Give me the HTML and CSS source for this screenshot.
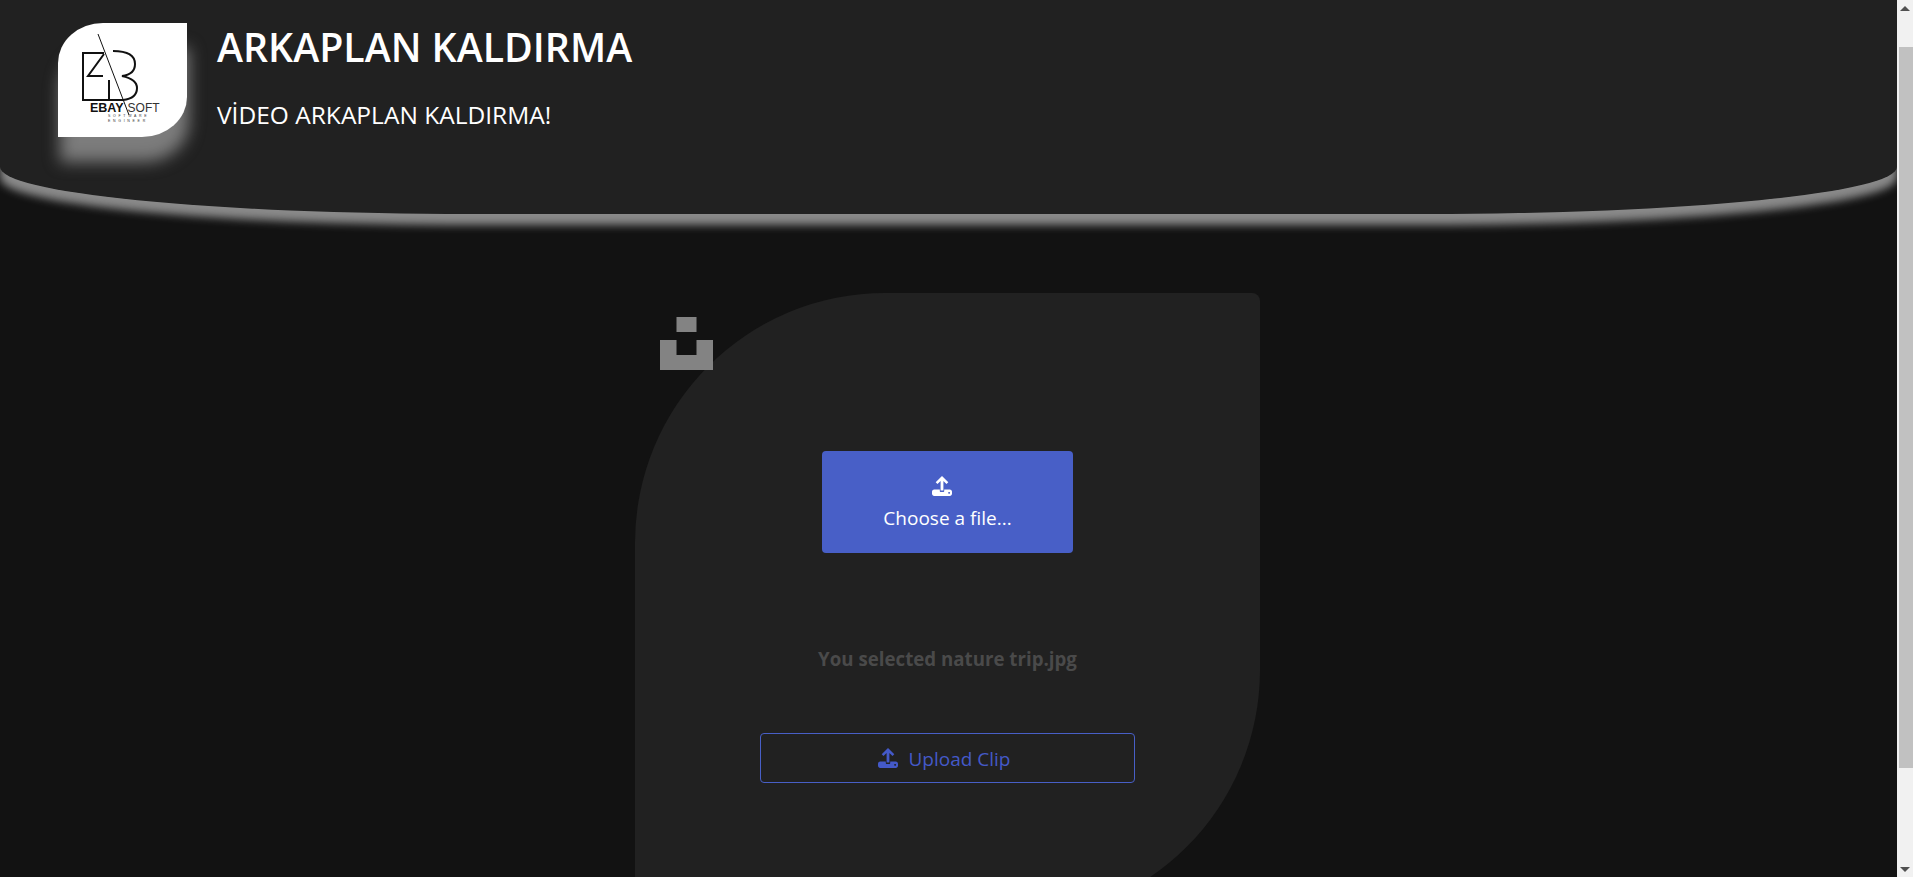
FILE: index.html
```html
<!DOCTYPE html>
<html lang="tr">
<head>
<meta charset="utf-8">
<title>Arkaplan Kaldırma</title>
<link rel="stylesheet" href="styles.css">
</head>
<body>
<svg class="sprite" width="0" height="0" aria-hidden="true">
  <symbol id="upload" viewBox="0 0 20 20">
    <path fill="currentColor" d="M10 0 L16.300 6.200 L14.500 8 L11.400 4.900 V14.600 H8.600 V4.900 L5.500 8 L3.700 6.200 Z"/>
    <path fill="currentColor" fill-rule="evenodd" d="M2.200 13.600 H7.800 V15 C7.800 15.800 8.200 16 8.700 16 H11.300 C11.800 16 12.200 15.800 12.200 15 V13.600 H17.800 C19 13.600 20 14.600 20 15.800 V17.800 C20 19 19 20 17.800 20 H2.200 C1 20 0 19 0 17.800 V15.800 C0 14.600 1 13.600 2.200 13.600 Z M17.100 16 a0.900 0.900 0 1 0 0.010 0 Z"/>
  </symbol>
</svg>
<div class="window">
  <div class="page">
    <header class="header">
      <div class="logo">
        <svg class="logo-mark" viewBox="0 0 129 114" aria-hidden="true">
          <path class="thin" d="M40 11 L71 92"/>
          <path class="thick" d="M46 30 H25 V77 H52"/>
          <path class="thick" d="M46 31 L30 53 H45"/>
          <path class="thick" d="M51 57 V77 H65 C74 76 79 72 79 65 C79 58 73 55 64 53 C72 52 77 48 77 41 C77 33 70 28 55 28"/>
        </svg>
        <div class="logo-name"><b>EBAY</b><span class="logo-soft">SOFT</span></div>
        <div class="logo-sub">SOFTWARE<br>ENGINEER</div>
      </div>
      <div class="titles">
        <h1 class="title">ARKAPLAN KALDIRMA</h1>
        <p class="subtitle">VİDEO ARKAPLAN KALDIRMA!</p>
      </div>
    </header>
    <main class="stage">
      <section class="card">
        <svg class="corner-mark" viewBox="0 0 53 53" aria-hidden="true">
          <path d="M16.500 0 H36.500 V15 H16.500 Z M0 23 H16.500 V38 H36.500 V23 H53 V53 H0 Z"/>
        </svg>
        <label class="choose">
          <svg class="icon-choose"><use href="#upload"/></svg>
          <span>Choose a file...</span>
        </label>
        <p class="selected">You selected nature trip.jpg</p>
        <button class="upload" type="button">
          <svg class="icon-upload"><use href="#upload"/></svg>
          <span class="upload-label">Upload Clip</span>
        </button>
      </section>
    </main>
  </div>
  <aside class="scrollbar" aria-hidden="true">
    <div class="arrow arrow-up"></div>
    <div class="track"><div class="thumb"></div></div>
    <div class="arrow arrow-down"></div>
  </aside>
</div>
</body>
</html>
```
FILE: styles.css
```css
* { box-sizing: border-box; }
html, body { margin: 0; height: 100%; overflow: hidden; }
body { background: #121212; font-family: "Open Sans", "Noto Sans", sans-serif; color: #fff; }
.sprite { position: absolute; }
.window { display: flex; height: 877px; }
.page { flex: 1; min-width: 0; height: 877px; overflow: hidden; background: #121212; }

.header {
  height: 214px;
  padding: 23px 58px 0;
  display: flex;
  gap: 30px;
  background: #212121;
  border-radius: 0 0 470px 470px / 0 0 47px 47px;
  box-shadow: 0 11px 8px #8a8a8a;
}
.logo {
  width: 129px;
  height: 114px;
  flex: none;
  position: relative;
  background: #fff;
  color: #111;
  border-radius: 45px 0 45px 0 / 40px 0 40px 0;
  box-shadow: 2px 25px 16px #7c7c7c;
}
.logo-mark { display: block; width: 129px; height: 114px; fill: none; stroke: #111; }
.thin { stroke-width: 1; }
.thick { stroke-width: 2; }
.logo-name {
  position: absolute;
  left: 32px;
  top: 78px;
  font: 12.500px/14px "Liberation Sans", sans-serif;
  white-space: nowrap;
}
.logo-soft { margin-left: 4px; font-size: 12px; color: #333; }
.logo-sub {
  position: absolute;
  left: 50px;
  top: 91px;
  font: 3.500px/5px "Liberation Sans", sans-serif;
  letter-spacing: 2.700px;
  white-space: nowrap;
  color: #333;
}
.titles { padding-top: 1px; }
.title { margin: 0; font-size: 39.300px; line-height: 47px; font-weight: 600; white-space: nowrap; }
.subtitle { margin: 26px 0 0; font-size: 24.500px; line-height: 36px; white-space: nowrap; }

.stage { display: flex; justify-content: center; padding: 79px 2px 0 0; }
.card {
  width: 625px;
  height: 627px;
  flex: none;
  position: relative;
  background: #212121;
  border-radius: 250px 8px 250px 0;
  display: flex;
  flex-direction: column;
  align-items: center;
  padding-top: 158px;
}
.corner-mark { position: absolute; left: 25px; top: 24px; width: 53px; height: 53px; fill: #838383; }
.choose {
  width: 251px;
  height: 102px;
  background: #485fc7;
  border-radius: 4px;
  display: flex;
  flex-direction: column;
  align-items: center;
  padding-top: 25px;
  font-size: 19px;
  line-height: 30px;
}
.icon-choose { width: 20px; height: 20px; margin: 0 11px 7px 0; flex: none; }
.selected { margin: 91px 0 0; font-size: 18.700px; line-height: 30px; font-weight: 700; color: #4a4a4a; }
.upload {
  margin-top: 59px;
  width: 375px;
  height: 50px;
  padding: 0 6px 0 0;
  background: transparent;
  border: 1px solid #485fc7;
  border-radius: 4px;
  color: #4459c8;
  font: 19px/30px "Open Sans", "Noto Sans", sans-serif;
  display: flex;
  align-items: center;
  justify-content: center;
  gap: 10px;
}
.upload-label { padding-top: 1px; }
.icon-upload { width: 20px; height: 20px; flex: none; }

.scrollbar {
  width: 16px;
  flex: none;
  display: flex;
  flex-direction: column;
  background: #f1f1f1;
}
.arrow { height: 17px; flex: none; position: relative; }
.arrow::after {
  content: "";
  position: absolute;
  left: 3px;
  border-left: 5px solid transparent;
  border-right: 5px solid transparent;
}
.arrow-up::after { top: 6px; border-bottom: 5px solid #505050; }
.arrow-down::after { bottom: 5px; border-top: 5px solid #505050; }
.track { flex: 1; padding-top: 30px; padding-left: 2px; }
.thumb { height: 721px; background: #c1c1c1; }
```
